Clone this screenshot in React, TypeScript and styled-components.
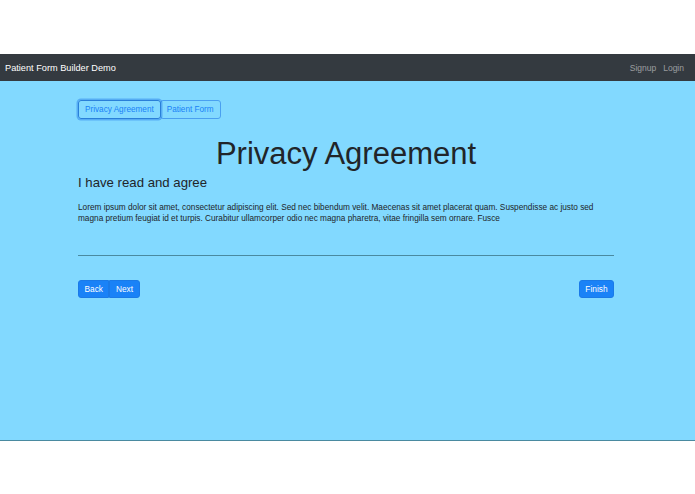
import React from "react";
import styled, { createGlobalStyle } from "styled-components";

const GlobalStyle = createGlobalStyle`
    html, body {
        margin: 0;
        padding: 0;
        background: #fff;
    }
    body {
        font-family: "Liberation Sans", Arial, sans-serif;
        color: #212529;
    }
    * {
        box-sizing: border-box;
    }
`;

const Page = styled.div`
    width: 695px;
    height: 494px;
    padding-top: 54px;
    display: flex;
    flex-direction: column;
`;

//━━━━━━━━━━━━━━━━━━━━━━━━━━━━━━━━━━━━
const NavBar = styled.nav`
    height: 27px;
    background-color: #343a40;
    display: flex;
    align-items: center;
    justify-content: space-between;
    padding: 0 11px 0 5px;
`;

const Brand = styled.span`
    color: #fff;
    font-size: 9.2px;
`;

const NavLinks = styled.div`
    display: flex;
    gap: 7px;
`;

const NavLink = styled.span`
    color: rgba(255, 255, 255, 0.5);
    font-size: 8.5px;
`;

//━━━━━━━━━━━━━━━━━━━━━━━━━━━━━━━━━━━━
const Main = styled.main`
    height: 360px;
    background-color: #82d9ff;
    border-bottom: 1px solid #4a8aa0;
`;

const Container = styled.div`
    width: 536px;
    margin-left: 78px;
    padding-top: 19px;
`;

const Tabs = styled.div`
    display: flex;
`;

const Tab = styled.button<{ $active?: boolean }>`
    height: 19px;
    padding: 0 6px;
    font-family: inherit;
    font-size: 8.2px;
    color: #1a82f7;
    background: transparent;
    border: 1px solid ${(p) => (p.$active ? "#2a7fd8" : "#4aa0f0")};
    border-radius: 3px;
    box-shadow: ${(p) => (p.$active ? "0 0 0 1.5px rgba(30, 120, 230, 0.45)" : "none")};
    position: relative;
    z-index: ${(p) => (p.$active ? 1 : 0)};
    & + & {
        margin-left: -1px;
    }
`;

const Title = styled.h1`
    margin: 17px 0 0;
    text-align: center;
    font-size: 31px;
    font-weight: 400;
    line-height: 36px;
`;

const SubTitle = styled.h2`
    margin: 2px 0 0;
    font-size: 13.2px;
    font-weight: 400;
    line-height: 18px;
`;

const Text = styled.p`
    margin: 10px 0 0;
    font-size: 8.25px;
    line-height: 11px;
`;

const Rule = styled.hr`
    margin: 31px 0 0;
    border: none;
    border-top: 1.5px solid #4a8aa0;
`;

const Actions = styled.div`
    margin-top: 24px;
    display: flex;
    justify-content: space-between;
`;

const Group = styled.div`
    display: flex;
`;

const Button = styled.button<{ $pos?: "left" | "right" }>`
    height: 18px;
    padding: 0 5.5px;
    font-family: inherit;
    font-size: 8.3px;
    font-weight: 400;
    color: #fff;
    background-color: #1a82f7;
    border: 1px solid #1a7ae8;
    border-radius: ${(p) =>
        p.$pos === "left" ? "3px 0 0 3px" : p.$pos === "right" ? "0 3px 3px 0" : "3px"};
`;

function App() {
    return (
        <>
            <GlobalStyle />
            <Page>
                <NavBar>
                    <Brand>Patient Form Builder Demo</Brand>
                    <NavLinks>
                        <NavLink>Signup</NavLink>
                        <NavLink>Login</NavLink>
                    </NavLinks>
                </NavBar>
                <Main>
                    <Container>
                        <Tabs>
                            <Tab $active>Privacy Agreement</Tab>
                            <Tab>Patient Form</Tab>
                        </Tabs>
                        <Title>Privacy Agreement</Title>
                        <SubTitle>I have read and agree</SubTitle>
                        <Text>
                            Lorem ipsum dolor sit amet, consectetur adipiscing elit. Sed nec bibendum velit.
                            Maecenas sit amet placerat quam. Suspendisse ac justo sed magna pretium feugiat id
                            et turpis. Curabitur ullamcorper odio nec magna pharetra, vitae fringilla sem ornare.
                            Fusce
                        </Text>
                        <Rule />
                        <Actions>
                            <Group>
                                <Button $pos="left">Back</Button>
                                <Button $pos="right">Next</Button>
                            </Group>
                            <Button>Finish</Button>
                        </Actions>
                    </Container>
                </Main>
            </Page>
        </>
    );
}

export default App;
